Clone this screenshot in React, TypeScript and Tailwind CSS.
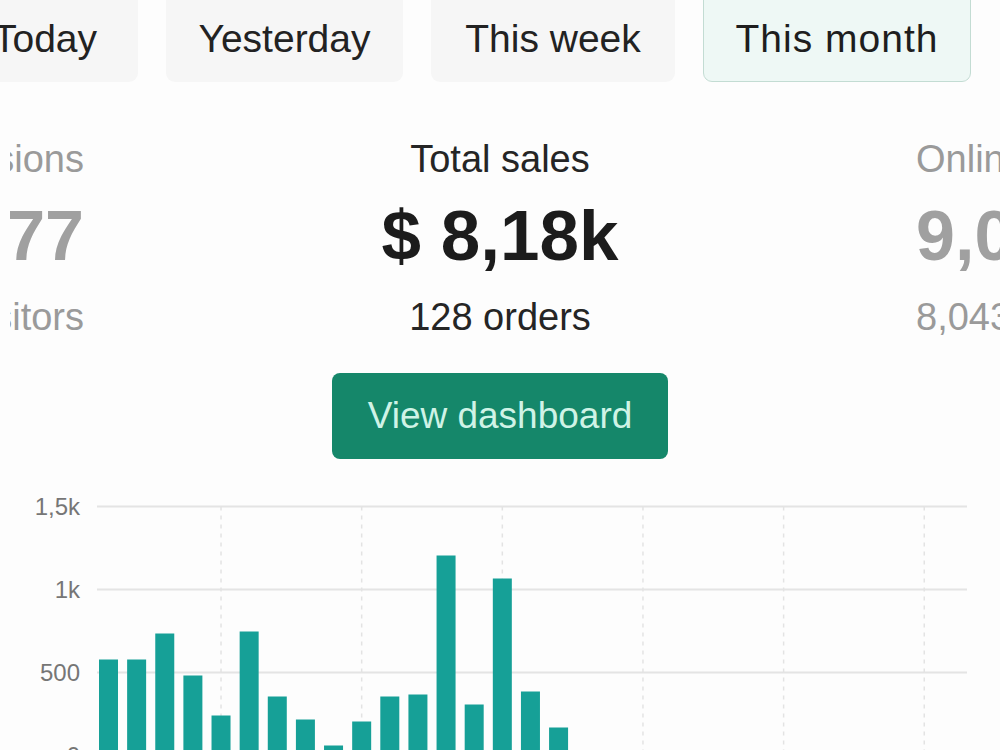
import React from "react";

const tabs = [
  { label: "Today", w: "w-[186px]", active: false },
  { label: "Yesterday", w: "w-[237px]", active: false },
  { label: "This week", w: "w-[244px]", active: false },
  { label: "This month", w: "w-[268px]", active: true },
];

const bars = [96, 96, 122, 80, 40, 124, 59, 36, 10, 34, 59, 61, 200, 51, 177, 64, 28];

function Chart() {
  const pitch = 28.13;
  const c0 = 13.5;
  const base = 290.5;
  const grid = [41.5, 124.5, 207.5, 290.5];
  const dashDays = [5, 10, 15, 20, 25, 30];
  return (
    <svg width="872" height="300" viewBox="0 0 872 300" className="block flex-none">
      {grid.map((y) => (
        <line key={y} x1="2" x2="872" y1={y} y2={y} stroke="#e4e4e4" strokeWidth="2" />
      ))}
      {dashDays.map((d) => {
        const x = c0 + pitch * (d - 1);
        return (
          <line
            key={d}
            x1={x}
            x2={x}
            y1={41.5}
            y2={300}
            stroke="#e3e3e3"
            strokeWidth="1.5"
            strokeDasharray="4 5"
          />
        );
      })}
      {bars.map((h, i) => {
        const cx = c0 + pitch * i;
        return <rect key={i} x={cx - 9.5} y={base - h} width="19" height={h} fill="#16a097" />;
      })}
    </svg>
  );
}

export default function App() {
  return (
    <div
      className="w-[1000px] h-[750px] overflow-hidden bg-[#fdfdfd] text-[#222]"
      style={{ fontFamily: '"Liberation Sans", Arial, sans-serif' }}
    >
      {/* Tabs */}
      <div className="flex justify-end gap-[28px] pr-[29px] -mt-[10px] overflow-hidden">
        {tabs.map((t) => (
          <div
            key={t.label}
            className={
              t.active
                ? `${t.w} h-[92px] flex-none flex items-center justify-center pt-[7px] rounded-[9px] border-[1.5px] border-[#c3dcd3] bg-[#eef8f5] text-[39px] tracking-[1px] text-[#1e1e1e]`
                : `${t.w} h-[92px] flex-none flex items-center justify-center pt-[7px] rounded-[9px] bg-[#f6f6f6] text-[39px] text-[#222]`
            }
          >
            <span className="whitespace-nowrap">{t.label}</span>
          </div>
        ))}
      </div>

      {/* Stats */}
      <div className="mt-[54px] grid grid-cols-[minmax(0,1fr)_240px_minmax(0,1fr)] gap-x-[296px] [clip-path:inset(0_0_0_10px)]">
        <div className="flex flex-col items-end text-[#9a9a9a] whitespace-nowrap">
          <div className="text-[38px] leading-[46px]">Sessions</div>
          <div className="mt-[19px] text-[70px] leading-[70px] font-bold text-[#a0a0a0]">1,177</div>
          <div className="mt-[23px] text-[38px] leading-[46px]">942 visitors</div>
        </div>
        <div className="flex flex-col items-center whitespace-nowrap">
          <div className="text-[38px] leading-[46px] text-[#252525]">Total sales</div>
          <div className="mt-[19px] text-[71px] leading-[70px] font-bold text-[#1c1c1c]">$ 8,18k</div>
          <div className="mt-[23px] text-[38px] leading-[46px] text-[#252525]">128 orders</div>
        </div>
        <div className="flex flex-col items-start text-[#9a9a9a] whitespace-nowrap">
          <div className="text-[38px] leading-[46px]">Online store sessions</div>
          <div className="mt-[19px] text-[70px] leading-[70px] font-bold text-[#a0a0a0]">9,051</div>
          <div className="mt-[23px] text-[38px] leading-[46px]">8,043 visitors</div>
        </div>
      </div>

      {/* Button */}
      <div className="mt-[33px] flex justify-center">
        <button className="w-[336px] h-[86px] rounded-[8px] bg-[#15876a] text-[#cff3e6] text-[37px] flex items-center justify-center">
          View dashboard
        </button>
      </div>

      {/* Chart */}
      <div className="mt-[6px] flex">
        <div className="w-[80px] flex-none flex flex-col text-[24px] text-[#767676]">
          {["1,5k", "1k", "500", "0"].map((l) => (
            <div key={l} className="h-[83px] flex items-center justify-end">
              {l}
            </div>
          ))}
        </div>
        <div className="ml-[15px]">
          <Chart />
        </div>
      </div>
    </div>
  );
}
